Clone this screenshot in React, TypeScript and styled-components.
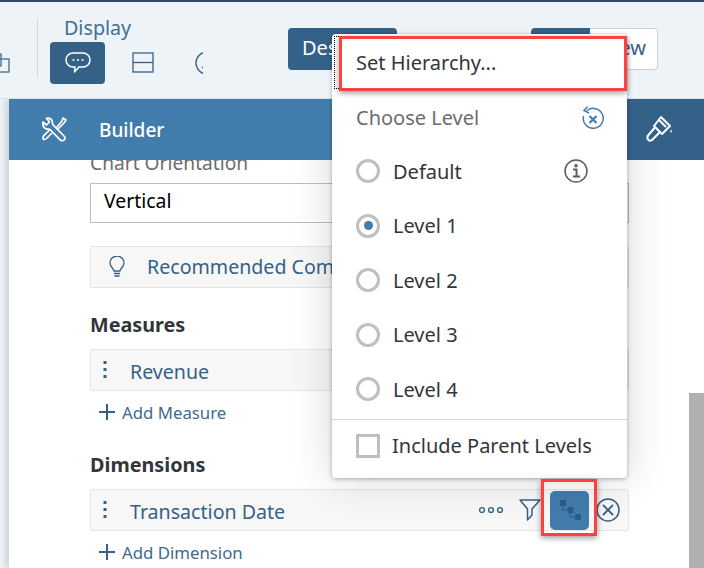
import React from "react";
import styled, { createGlobalStyle } from "styled-components";

const Global = createGlobalStyle`
  html, body { margin: 0; padding: 0; background: #fff; }
  * { box-sizing: border-box; }
  body { font-family: "Noto Sans", "Open Sans", Arial, sans-serif; }
  svg { flex: none; display: block; }
`;

const Page = styled.div`
  position: relative;
  width: 704px;
  height: 568px;
  overflow: hidden;
  display: flex;
  flex-direction: column;
  background: #eef3f8;
  border-top: 2px solid #2f4a66;
`;

const Toolbar = styled.div`
  position: relative;
  height: 97px;
  flex: none;
  display: flex;
  align-items: flex-start;
  background: #eef3f8;
  border-bottom: 1px solid #d5e2ee;
  overflow: hidden;
`;

const ClippedIcon = styled.div<{ $w: number; $ml: number; $mt: number }>`
  width: ${(p) => p.$w}px;
  height: 24px;
  margin-left: ${(p) => p.$ml}px;
  margin-top: ${(p) => p.$mt}px;
  overflow: hidden;
  flex: none;
  display: flex;
  justify-content: flex-end;
`;

const Divider = styled.div`
  width: 1px;
  height: 60px;
  margin-left: 27px;
  margin-top: 16px;
  background: #d4d8dc;
  flex: none;
`;

const DisplayGroup = styled.div`
  width: 238px;
  margin-left: 12px;
  flex: none;
  display: flex;
  flex-direction: column;
`;

const GroupLabel = styled.div`
  margin-left: 14px;
  margin-top: 13px;
  height: 27px;
  font-size: 19.7px;
  line-height: 26px;
  color: #427093;
`;

const ToolRow = styled.div`
  display: flex;
  align-items: center;
`;

const ToolActive = styled.div`
  width: 55px;
  height: 42px;
  border-radius: 4px;
  background: #346187;
  display: flex;
  align-items: center;
  justify-content: center;
`;

const ToolPlain = styled.div<{ $w: number; $ml: number }>`
  width: ${(p) => p.$w}px;
  height: 24px;
  margin-left: ${(p) => p.$ml}px;
  overflow: hidden;
  display: flex;
`;

const DesignButton = styled.div`
  width: 109px;
  height: 42px;
  margin-top: 26px;
  border-radius: 4px;
  background: #346187;
  color: #fff;
  font-size: 20px;
  line-height: 40px;
  padding-left: 14px;
  flex: none;
`;

const Segmented = styled.div`
  display: flex;
  margin-left: 134px;
  margin-top: 26px;
  height: 42px;
  flex: none;
`;

const SegDark = styled.div`
  width: 59px;
  background: #346187;
  border-radius: 4px 0 0 4px;
`;

const SegLight = styled.div`
  width: 68px;
  background: #fff;
  border: 1px solid #c9d0d6;
  border-left: 0;
  border-radius: 0 4px 4px 0;
  color: #346187;
  font-size: 20px;
  line-height: 38px;
  text-align: right;
  padding-right: 11px;
`;

const Panel = styled.div`
  flex: 1;
  margin-left: 9px;
  display: flex;
  flex-direction: column;
  background: #fff;
  box-shadow: -4px 0 6px rgba(0, 0, 0, 0.12);
  min-height: 0;
`;

const PanelHeader = styled.div`
  height: 61px;
  flex: none;
  display: flex;
  align-items: center;
  padding-left: 31px;
  background: linear-gradient(90deg, #427cac 0 50%, #346187 50% 100%);
  color: #fff;
  font-size: 19px;
  font-weight: 500;
  position: relative;
  z-index: 2;
`;

const HeaderTitle = styled.span`
  margin-left: 31px;
`;

const HeaderEnd = styled.div`
  margin-left: auto;
  margin-right: 31px;
  display: flex;
`;

const PanelBody = styled.div`
  flex: 1;
  position: relative;
  overflow: hidden;
  min-height: 0;
  padding-left: 81px;
  width: 100%;
`;

const Form = styled.div`
  width: 539px;
  margin-top: -8px;
  display: flex;
  flex-direction: column;
`;

const FieldLabel = styled.div`
  height: 22px;
  font-size: 19.2px;
  line-height: 22px;
  color: #6a6d70;
  white-space: nowrap;
`;

const SelectBox = styled.div`
  height: 40px;
  margin-top: 9px;
  border: 1px solid #bfbfbf;
  background: #fff;
  padding-left: 13px;
  font-size: 19.4px;
  line-height: 33px;
  color: #000;
`;

const Row = styled.div<{ $mt: number; $pl?: number }>`
  height: 42px;
  margin-top: ${(p) => p.$mt}px;
  border: 1px solid #e4e4e4;
  border-radius: 3px;
  background: #f7f7f7;
  display: flex;
  align-items: center;
  padding-left: ${(p) => p.$pl ?? 12}px;
  color: #346187;
  font-size: 19.6px;
  position: relative;
`;

const RowText = styled.span<{ $ml: number; $drop?: number; $lift?: number }>`
  margin-left: ${(p) => p.$ml}px;
  padding-top: ${(p) => p.$drop ?? 0}px;
  padding-bottom: ${(p) => p.$lift ?? 0}px;
  white-space: nowrap;
`;

const RowTools = styled.div`
  margin-left: auto;
  display: flex;
  align-items: center;
  gap: 15px;
  padding-right: 8px;
`;

const SectionTitle = styled.div<{ $mt: number }>`
  margin-top: ${(p) => p.$mt}px;
  height: 24px;
  font-size: 19.8px;
  line-height: 24px;
  font-weight: 700;
  color: #32363a;
`;

const SectionGap = styled.div`
  height: 12px;
`;

const AddLink = styled.div`
  margin-top: 9px;
  height: 24px;
  display: flex;
  align-items: center;
  gap: 7px;
  padding-left: 9px;
  font-size: 16.8px;
  color: #3f6a8f;
`;

const RowEndGroup = styled.div`
  display: flex;
  align-items: center;
`;

const HierarchyButton = styled.div`
  width: 39px;
  height: 39px;
  margin-left: 9px;
  margin-right: 7px;
  border-radius: 5px;
  background: #427cac;
  display: flex;
  align-items: center;
  justify-content: center;
`;

const MenuGlow = styled.div`
  position: absolute;
  left: 323px;
  top: -40px;
  width: 295px;
  height: 358px;
  box-shadow: 0 0 40px rgba(0, 0, 0, 0.16);
  pointer-events: none;
`;

const ScrollThumb = styled.div`
  position: absolute;
  right: 0;
  bottom: 0;
  width: 15px;
  height: 175px;
  background: #b0b0b0;
`;

const Menu = styled.div`
  position: absolute;
  left: 332px;
  top: 32px;
  width: 295px;
  height: 444px;
  z-index: 5;
  background: #fff;
  border-radius: 4px;
  box-shadow: 0 1px 4px rgba(0, 0, 0, 0.3);
  color: #32363a;
  font-size: 20px;
`;

const MenuHierarchy = styled.div`
  height: 57px;
  padding-left: 24px;
  line-height: 58px;
  white-space: nowrap;
  outline: 1px dotted #000;
  outline-offset: -3px;
`;

const MenuHead = styled.div`
  height: 53px;
  padding: 0 22px 0 24px;
  display: flex;
  align-items: center;
  justify-content: space-between;
  color: #6a6d70;
`;

const MenuOption = styled.div`
  height: 54.5px;
  padding: 0 39px 0 24px;
  display: flex;
  align-items: center;
`;

const Radio = styled.span<{ $on?: boolean }>`
  width: 24px;
  height: 24px;
  border-radius: 50%;
  border: 3px solid #bfbfbf;
  display: flex;
  align-items: center;
  justify-content: center;
  flex: none;
  &::after {
    content: "";
    width: 9px;
    height: 9px;
    border-radius: 50%;
    background: ${(p) => (p.$on ? "#427cac" : "transparent")};
  }
`;

const OptionText = styled.span`
  margin-left: 13px;
`;

const OptionEnd = styled.span`
  margin-left: auto;
  display: flex;
`;

const MenuFooter = styled.div`
  margin-top: 2px;
  height: 53px;
  border-top: 1px solid #d9d9d9;
  padding-left: 24px;
  display: flex;
  align-items: center;
`;

const Check = styled.span`
  width: 24px;
  height: 24px;
  border: 3px solid #bfbfbf;
  flex: none;
`;

const CheckText = styled.span`
  margin-left: 12px;
  white-space: nowrap;
`;

const Callout = styled.div<{ $x: number; $y: number; $w: number; $h: number }>`
  position: absolute;
  left: ${(p) => p.$x}px;
  top: ${(p) => p.$y}px;
  width: ${(p) => p.$w}px;
  height: ${(p) => p.$h}px;
  z-index: 8;
  border: 3px solid #ff4040;
  box-shadow: 0 2px 6px rgba(0, 0, 0, 0.4);
  pointer-events: none;
`;

const Chat = () => (
  <svg width="26" height="24" viewBox="0 0 26 24" fill="none" stroke="#fff" strokeWidth="1.5">
    <path d="M8 2h10a7 7 0 0 1 7 7a7 7 0 0 1-7 7h-4l-4.500 5 .5-5H8a7 7 0 0 1-7-7a7 7 0 0 1 7-7z" strokeLinejoin="round" />
    <circle cx="8.500" cy="9" r="1" fill="#fff" stroke="none" />
    <circle cx="13" cy="9" r="1" fill="#fff" stroke="none" />
    <circle cx="17.500" cy="9" r="1" fill="#fff" stroke="none" />
  </svg>
);

const Tools = () => (
  <svg width="28" height="28" viewBox="0 0 28 28" fill="none" stroke="#fff" strokeWidth="1.7" strokeLinejoin="round" strokeLinecap="round">
    <path d="M3 6l3.500 3 3-3-3-3.600c3-.9 6.300 1 6 4.600-.1 1 0 1.400.8 2.200L24 20c1.600 1.600.9 3.200.2 3.900-.8.8-2.600 1.400-4-.1L10.300 13.900c-.8-.8-1.300-.9-2.300-.8-3.600.3-6-3.600-5-7.100z" />
    <path d="M17 11l5-6 1-3 3 2-2 3-5.500 5.500M11.500 17.500L7 22c-1 1-1.500 1.500-2.500 1.500S3 22.500 3 21.500s1-2 1.800-2.800L9 14.500" />
  </svg>
);

const Brush = () => (
  <svg width="28" height="30" viewBox="0 0 28 30" fill="none" stroke="#fff" strokeWidth="2" strokeLinejoin="round">
    <path d="M16 2L25 11L17 19L9 11Z" />
    <path d="M9.500 13L3.500 20c-1.500 1.500-1.500 3-.5 4.500s3 1.500 4.500 0L15 17" />
    <path d="M14 5l7 7" />
    <path d="M26 14.500c.8 1.300 1.200 2.100.7 2.800-.5.500-1.400.2-1.400-.7 0-.6.300-1.100.7-2.100z" fill="#fff" stroke="none" />
  </svg>
);

const Hierarchy = () => (
  <svg width="24" height="24" viewBox="0 0 24 24" fill="#2f5c84" stroke="none">
    <rect x="2" y="2" width="6" height="6" />
    <rect x="9.500" y="9" width="6" height="6" />
    <rect x="17" y="16" width="6" height="6" />
    <path d="M4.500 8v4h5M12 15v4h5" fill="none" stroke="#2f5c84" strokeWidth="1" />
  </svg>
);

const Cross = () => (
  <svg width="24" height="24" viewBox="0 0 24 24" fill="none" stroke="#346187" strokeWidth="1.500">
    <circle cx="12" cy="12" r="11" />
    <path d="M7 7l10 10M17 7L7 17" strokeWidth="1.800" />
  </svg>
);

const Filter = () => (
  <svg width="22" height="22" viewBox="0 0 22 22" fill="none" stroke="#346187" strokeWidth="1.500" strokeLinejoin="round">
    <path d="M1 1h20l-8 9v6l-4.500 5V10z" />
  </svg>
);

const Ellipsis = () => (
  <svg width="26" height="8" viewBox="0 0 26 8" fill="none" stroke="#346187" strokeWidth="1.400">
    <circle cx="4" cy="4" r="2.400" />
    <circle cx="13" cy="4" r="2.400" />
    <circle cx="22" cy="4" r="2.400" />
  </svg>
);

const Grip = () => (
  <svg width="4" height="20" viewBox="0 0 4 20" fill="#346187">
    <rect x="0.500" y="1" width="3" height="3" />
    <rect x="0.500" y="8" width="3" height="3" />
    <rect x="0.500" y="15" width="3" height="3" />
  </svg>
);

const Plus = () => (
  <svg width="16" height="16" viewBox="0 0 16 16" stroke="#346187" strokeWidth="2">
    <path d="M8 0v16M0 8h16" />
  </svg>
);

const Bulb = () => (
  <svg width="18" height="22" viewBox="0 0 18 22" fill="none" stroke="#346187" strokeWidth="1.300">
    <path d="M6 15c0-2.500-4-4-4-8a7 7 0 0 1 14 0c0 4-4 5.500-4 8z" strokeLinejoin="round" />
    <path d="M6 17.500h6M6.500 20h5" strokeWidth="1.500" />
  </svg>
);

const UndoX = () => (
  <svg width="24" height="24" viewBox="0 0 24 24" fill="none" stroke="#427cac" strokeWidth="1.500">
    <path d="M6 4.500A10 10 0 1 1 2.500 10" />
    <path d="M6.500 0.500L3 4.500l5 2.500" />
    <path d="M8.500 10l7 7M15.500 10l-7 7" strokeWidth="2.200" />
  </svg>
);

const Info = () => (
  <svg width="24" height="24" viewBox="0 0 24 24" fill="none" stroke="#5a5e62" strokeWidth="1.500">
    <circle cx="12" cy="12" r="11" />
    <circle cx="12" cy="6.700" r="1.700" fill="#5a5e62" stroke="none" />
    <path d="M9 10.500h3.500V17M9 17.500h7" strokeWidth="2" />
  </svg>
);

const levels = ["Level 1", "Level 2", "Level 3", "Level 4"];

export default function App() {
  return (
    <Page>
      <Global />
      <Toolbar>
        <ClippedIcon $w={10} $ml={0} $mt={50}>
          <svg width="22" height="24" viewBox="0 0 22 24" fill="none" stroke="#346187" strokeWidth="1.200">
            <rect x="1" y="2" width="12" height="12" />
            <rect x="7" y="7" width="14" height="13" />
          </svg>
        </ClippedIcon>
        <Divider />
        <DisplayGroup>
          <GroupLabel>Display</GroupLabel>
          <ToolRow>
            <ToolActive>
              <Chat />
            </ToolActive>
            <ToolPlain $w={22} $ml={27}>
              <svg width="22" height="22" viewBox="0 0 22 22" fill="none" stroke="#346187" strokeWidth="1.300">
                <rect x="1" y="2" width="20" height="19" />
                <path d="M1 11.500h20" />
              </svg>
            </ToolPlain>
            <ToolPlain $w={8} $ml={41}>
              <svg width="24" height="24" viewBox="0 0 24 24" fill="none" stroke="#346187" strokeWidth="1.300">
                <circle cx="12" cy="12" r="11" />
                <path d="M7 17l5-4" />
              </svg>
            </ToolPlain>
          </ToolRow>
        </DisplayGroup>
        <DesignButton>Design</DesignButton>
        <Segmented>
          <SegDark />
          <SegLight>View</SegLight>
        </Segmented>
      </Toolbar>
      <Panel>
        <PanelHeader>
          <Tools />
          <HeaderTitle>Builder</HeaderTitle>
          <HeaderEnd>
            <Brush />
          </HeaderEnd>
        </PanelHeader>
        <PanelBody>
          <Form>
            <FieldLabel>Chart Orientation</FieldLabel>
            <SelectBox>Vertical</SelectBox>
            <Row $mt={23} $pl={17}>
              <Bulb />
              <RowText $ml={21} $lift={2}>Recommended Combinations</RowText>
            </Row>
            <SectionTitle $mt={25}>Measures</SectionTitle>
            <SectionGap />
            <Row $mt={0}>
              <Grip />
              <RowText $ml={23} $drop={3}>Revenue</RowText>
            </Row>
            <AddLink>
              <Plus />
              Add Measure
            </AddLink>
            <SectionTitle $mt={29}>Dimensions</SectionTitle>
            <SectionGap />
            <Row $mt={0}>
              <Grip />
              <RowText $ml={23} $drop={3}>Transaction Date</RowText>
              <RowTools>
                <Ellipsis />
                <RowEndGroup>
                  <Filter />
                  <HierarchyButton>
                    <Hierarchy />
                  </HierarchyButton>
                  <Cross />
                </RowEndGroup>
              </RowTools>
            </Row>
            <AddLink>
              <Plus />
              Add Dimension
            </AddLink>
          </Form>
          <MenuGlow />
          <ScrollThumb />
        </PanelBody>
      </Panel>
      <Menu>
        <MenuHierarchy>Set Hierarchy...</MenuHierarchy>
        <MenuHead>
          Choose Level
          <UndoX />
        </MenuHead>
        <MenuOption>
          <Radio />
          <OptionText>Default</OptionText>
          <OptionEnd>
            <Info />
          </OptionEnd>
        </MenuOption>
        {levels.map((level, i) => (
          <MenuOption key={level}>
            <Radio $on={i === 0} />
            <OptionText>{level}</OptionText>
          </MenuOption>
        ))}
        <MenuFooter>
          <Check />
          <CheckText>Include Parent Levels</CheckText>
        </MenuFooter>
      </Menu>
      <Callout $x={339} $y={34} $w={288} $h={55} />
      <Callout $x={541} $y={477} $w={56} $h={57} />
    </Page>
  );
}
